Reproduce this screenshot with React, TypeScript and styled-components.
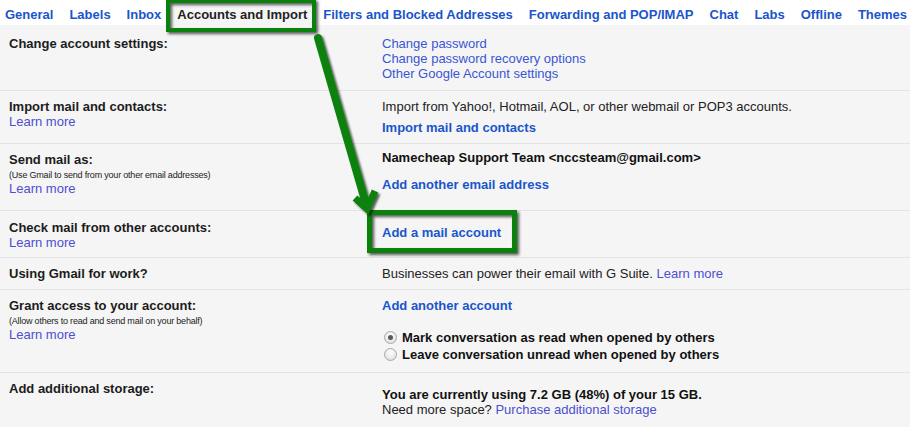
import React from "react";
import styled, { createGlobalStyle, css } from "styled-components";

const GlobalStyle = createGlobalStyle`
  html, body {
    margin: 0;
    padding: 0;
    background: #f5f5f5;
  }
  body {
    font-family: "Liberation Sans", Arial, sans-serif;
    font-size: 13px;
    color: #222;
  }
`;

const GREEN = "#0a810c";

const Page = styled.div`
  position: relative;
  width: 910px;
  height: 427px;
  overflow: hidden;
  background: #f5f5f5;
`;

const TabBar = styled.nav`
  display: flex;
  height: 25px;
  margin-left: -3px;
  background: #fff;
`;

const markBox = (inset: string, width: number) => css`
  &::after {
    content: "";
    position: absolute;
    inset: ${inset};
    border: ${width}px solid ${GREEN};
    filter: drop-shadow(2px 2px 1.5px rgba(0, 0, 0, 0.65));
    pointer-events: none;
    z-index: 3;
  }
`;

const Tab = styled.a<{ $active?: boolean }>`
  position: relative;
  padding: 7px 8px 0;
  line-height: 15px;
  font-weight: bold;
  white-space: nowrap;
  cursor: pointer;
  color: ${(p) => (p.$active ? "#222" : "#1a55cc")};
  background: ${(p) => (p.$active ? "#f5f5f5" : "transparent")};
  ${(p) => p.$active && markBox("-1px -1px -7px -3px", 4)}
`;

const Row = styled.div<{ $pt: number; $pb: number; $last?: boolean }>`
  display: grid;
  grid-template-columns: 373px 1fr;
  padding: ${(p) => p.$pt}px 0 ${(p) => p.$pb}px 9px;
  border-bottom: ${(p) => (p.$last ? "none" : "1px solid #e4e4e4")};
  line-height: 15px;
`;

const Left = styled.div``;

const Right = styled.div<{ $mt?: number }>`
  margin-top: ${(p) => p.$mt ?? 0}px;
`;

const Label = styled.div<{ $mt?: number }>`
  margin-top: ${(p) => p.$mt ?? 0}px;
  font-weight: bold;
  color: #1c1c1c;
`;

const Note = styled.div`
  margin-top: 2px;
  font-size: 9px;
  line-height: 12px;
  letter-spacing: -0.2px;
  color: #222;
`;

const Link = styled.a<{ $bold?: boolean; $block?: boolean; $mt?: number }>`
  display: ${(p) => (p.$block ? "block" : "inline")};
  margin-top: ${(p) => p.$mt ?? 0}px;
  font-weight: ${(p) => (p.$bold ? "bold" : "normal")};
  color: ${(p) => (p.$bold ? "#1a55cc" : "#3b55d4")};
  cursor: pointer;
  text-decoration: none;
`;

const SoftLink = styled(Link)`
  color: #4c4fd2;
`;

const Strong = styled.div<{ $mt?: number }>`
  margin-top: ${(p) => p.$mt ?? 0}px;
  font-weight: bold;
  color: #111;
`;

const Marked = styled.span`
  position: relative;
  display: inline-block;
  ${markBox("-15px -16px -13px -15px", 5)}
`;

const RadioList = styled.div`
  margin-top: 16px;
`;

const RadioRow = styled.label`
  display: flex;
  align-items: center;
  height: 17px;
  line-height: 17px;
  font-weight: bold;
  color: #111;
`;

const Radio = styled.span<{ $checked?: boolean }>`
  position: relative;
  flex: none;
  width: 11px;
  height: 11px;
  margin: 0 5px 0 2px;
  border: 1px solid #a8a8a8;
  border-radius: 50%;
  background: radial-gradient(circle at 50% 35%, #ffffff, #d9d9d9);
  ${(p) =>
    p.$checked &&
    css`
      &::after {
        content: "";
        position: absolute;
        left: 3px;
        top: 3px;
        width: 5px;
        height: 5px;
        border-radius: 50%;
        background: #5a5a5a;
      }
    `}
`;

const Arrow = styled.svg`
  position: absolute;
  left: 0;
  top: 0;
  width: 910px;
  height: 427px;
  pointer-events: none;
  z-index: 4;
`;

const tabs = [
  "General",
  "Labels",
  "Inbox",
  "Accounts and Import",
  "Filters and Blocked Addresses",
  "Forwarding and POP/IMAP",
  "Chat",
  "Labs",
  "Offline",
  "Themes",
];

export default function App() {
  return (
    <>
      <GlobalStyle />
      <Page>
        <TabBar>
          {tabs.map((t) => (
            <Tab key={t} $active={t === "Accounts and Import"}>
              {t}
            </Tab>
          ))}
        </TabBar>

        <Row $pt={11} $pb={9}>
          <Left>
            <Label>Change account settings:</Label>
          </Left>
          <Right>
            <Link $block>Change password</Link>
            <Link $block>Change password recovery options</Link>
            <Link $block>Other Google Account settings</Link>
          </Right>
        </Row>

        <Row $pt={8} $pb={8}>
          <Left>
            <Label>Import mail and contacts:</Label>
            <SoftLink $block>Learn more</SoftLink>
          </Left>
          <Right>
            <div>Import from Yahoo!, Hotmail, AOL, or other webmail or POP3 accounts.</div>
            <Link $bold $block $mt={6}>
              Import mail and contacts
            </Link>
          </Right>
        </Row>

        <Row $pt={6} $pb={14}>
          <Left>
            <Label $mt={2}>Send mail as:</Label>
            <Note>(Use Gmail to send from your other email addresses)</Note>
            <SoftLink $block>Learn more</SoftLink>
          </Left>
          <Right>
            <Strong>Namecheap Support Team &lt;nccsteam@gmail.com&gt;</Strong>
            <Link $bold $block $mt={12}>
              Add another email address
            </Link>
          </Right>
        </Row>

        <Row $pt={9} $pb={7}>
          <Left>
            <Label>Check mail from other accounts:</Label>
            <SoftLink $block>Learn more</SoftLink>
          </Left>
          <Right $mt={5}>
            <Marked>
              <Link $bold>Add a mail account</Link>
            </Marked>
          </Right>
        </Row>

        <Row $pt={8} $pb={8}>
          <Left>
            <Label>Using Gmail for work?</Label>
          </Left>
          <Right>
            Businesses can power their email with G Suite. <SoftLink>Learn more</SoftLink>
          </Right>
        </Row>

        <Row $pt={8} $pb={9}>
          <Left>
            <Label>Grant access to your account:</Label>
            <Note>(Allow others to read and send mail on your behalf)</Note>
            <SoftLink $block>Learn more</SoftLink>
          </Left>
          <Right>
            <Link $bold $block>
              Add another account
            </Link>
            <RadioList>
              <RadioRow>
                <Radio $checked />
                Mark conversation as read when opened by others
              </RadioRow>
              <RadioRow>
                <Radio />
                Leave conversation unread when opened by others
              </RadioRow>
            </RadioList>
          </Right>
        </Row>

        <Row $pt={8} $pb={8} $last>
          <Left>
            <Label>Add additional storage:</Label>
          </Left>
          <Right $mt={6}>
            <Strong>You are currently using 7.2 GB (48%) of your 15 GB.</Strong>
            <div>
              Need more space? <SoftLink>Purchase additional storage</SoftLink>
            </div>
          </Right>
        </Row>

        <Arrow viewBox="0 0 910 427">
          <defs>
            <filter id="shadow" x="-50%" y="-10%" width="200%" height="120%">
              <feDropShadow dx="2" dy="2" stdDeviation="1.3" floodColor="#000" floodOpacity="0.65" />
            </filter>
          </defs>
          <g filter="url(#shadow)" stroke={GREEN} fill="none">
            <line x1="318" y1="38" x2="366" y2="204" strokeWidth="8" strokeLinecap="round" />
            <polyline points="355,198 367,209 375,191" strokeWidth="7" strokeLinejoin="miter" />
          </g>
        </Arrow>
      </Page>
    </>
  );
}
